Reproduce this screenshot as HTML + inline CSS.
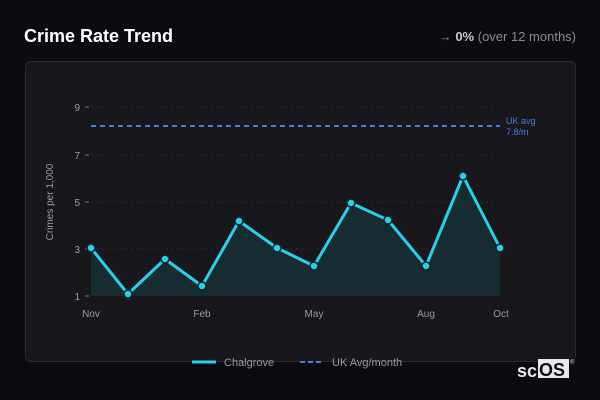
<!DOCTYPE html><html><head><style>
body{margin:0;width:600px;height:400px;background:#0c0b10;font-family:"Liberation Sans",sans-serif;overflow:hidden;position:relative}
.t{position:absolute;left:24px;top:26px;color:#fff;font-weight:bold;font-size:18px}
.r{position:absolute;right:24px;top:29px;color:#8a8a90;font-size:13px}
.r b{color:#c8c8cc}
.card{position:absolute;left:25px;top:61px;width:549px;height:299px;background:#18171c;border:1px solid #2c2b31;border-radius:6px}
svg{position:absolute;left:0;top:0}
</style></head><body>
<div class="t">Crime Rate Trend</div>
<div class="r">→ <b>0%</b> (over 12 months)</div>
<div class="card"></div>
<svg width="600" height="400" font-family="Liberation Sans,sans-serif">
<g stroke="#29282e" stroke-dasharray="2,3"><line x1="91" y1="107" x2="500" y2="107"/><line x1="91" y1="155" x2="500" y2="155"/><line x1="91" y1="202" x2="500" y2="202"/><line x1="91" y1="249" x2="500" y2="249"/></g>
<g fill="#9a9aa0" font-size="10" text-anchor="end"><text x="80" y="111">9</text><text x="80" y="159">7</text><text x="80" y="206">5</text><text x="80" y="253">3</text><text x="80" y="300">1</text></g>
<g stroke="#777" ><line x1="85" y1="107" x2="89" y2="107"/><line x1="85" y1="155" x2="89" y2="155"/><line x1="85" y1="202" x2="89" y2="202"/><line x1="85" y1="249" x2="89" y2="249"/><line x1="85" y1="296" x2="89" y2="296"/></g>
<text transform="translate(53,202) rotate(-90)" fill="#9a9aa0" font-size="10" text-anchor="middle">Crimes per 1,000</text>
<line x1="91" y1="126" x2="500" y2="126" stroke="#4a7fd8" stroke-width="2" stroke-dasharray="5,4"/>
<text x="506" y="124" fill="#4a7fd8" font-size="9">UK avg</text><text x="506" y="135" fill="#4a7fd8" font-size="9">7.8/m</text>
<polygon fill="#172c30" points="91,296 91,248 128,294 165,259 202,286 239,221 277,248 314,266 351,203 388,220 426,266 463,176 500,248 500,296"/>
<polyline fill="none" stroke="#2ad0ea" stroke-width="3" stroke-linejoin="round" points="91,248 128,294 165,259 202,286 239,221 277,248 314,266 351,203 388,220 426,266 463,176 500,248"/>
<g fill="#2ad0ea" stroke="#10252a" stroke-width="1.5"><circle cx="91" cy="248" r="4"/><circle cx="128" cy="294" r="4"/><circle cx="165" cy="259" r="4"/><circle cx="202" cy="286" r="4"/><circle cx="239" cy="221" r="4"/><circle cx="277" cy="248" r="4"/><circle cx="314" cy="266" r="4"/><circle cx="351" cy="203" r="4"/><circle cx="388" cy="220" r="4"/><circle cx="426" cy="266" r="4"/><circle cx="463" cy="176" r="4"/><circle cx="500" cy="248" r="4"/></g>
<g fill="#9a9aa0" font-size="10" text-anchor="middle"><text x="91" y="317">Nov</text><text x="202" y="317">Feb</text><text x="314" y="317">May</text><text x="426" y="317">Aug</text><text x="501" y="317">Oct</text></g>
<line x1="192" y1="362" x2="216" y2="362" stroke="#2ad0ea" stroke-width="3"/>
<text x="224" y="366" fill="#9a9aa0" font-size="11">Chalgrove</text>
<line x1="300" y1="362" x2="324" y2="362" stroke="#4a7fd8" stroke-width="2" stroke-dasharray="5,3"/>
<text x="332" y="366" fill="#9a9aa0" font-size="11">UK Avg/month</text>
<text x="517" y="377" fill="#e8e8e8" font-size="18" font-weight="bold">sc</text>
<rect x="538" y="359" width="31" height="19" fill="#e8e8e8"/>
<text x="539" y="376" fill="#0c0b10" font-size="18" font-weight="bold">OS</text>
<text x="570" y="364" fill="#ccc" font-size="6">®</text>
</svg>
</body></html>
